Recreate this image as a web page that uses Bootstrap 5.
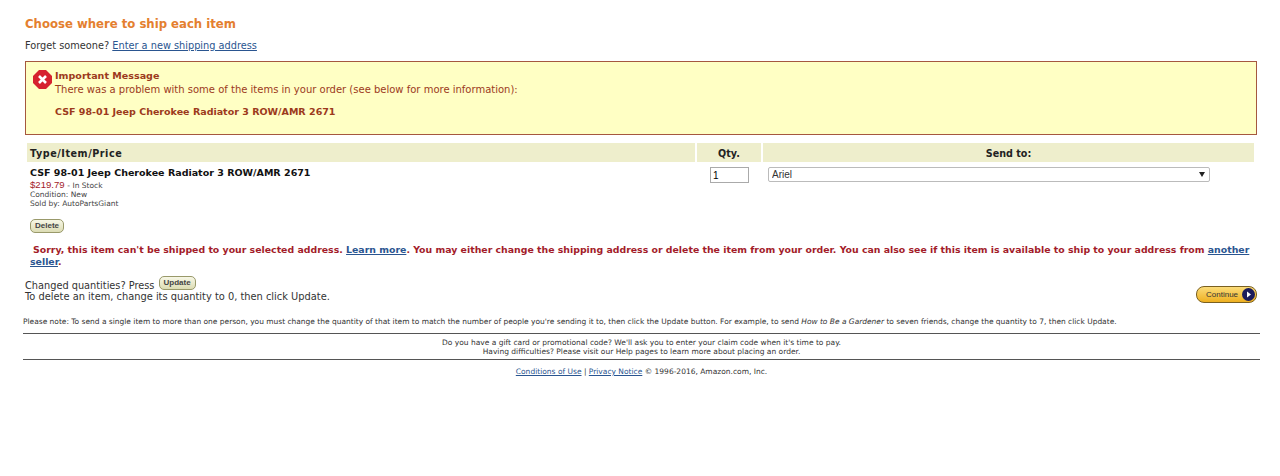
<!DOCTYPE html>
<html lang="en">
<head>
  <meta charset="UTF-8" />
  <meta name="viewport" content="width=device-width, initial-scale=1" />
  <title>Choose where to ship each item</title>
  <link href="https://cdn.jsdelivr.net/npm/bootstrap@5.3.3/dist/css/bootstrap.min.css" rel="stylesheet" />
  <style>
    body {
      font-family: "DejaVu Sans", Verdana, sans-serif;
      font-size: 9.85px;
      line-height: 13px;
      color: #333;
      background: #fff;
    }
    a { color: #2a5590; }
    .page-wrap { padding: 16px 20px 0 23px; }
    .ship-title {
      font-size: 11.7px;
      font-weight: 700;
      line-height: 16px;
      color: #e4802f;
      margin: 0 0 0 2px;
    }
    .forget-line { margin: 7px 0 0 2px; font-size: 9.77px; }
    .msg-box {
      margin: 9px 3px 0 2px;
      height: 74px;
      border: 1px solid #a5583f;
      background: #ffffc4;
      color: #9c3a1c;
      padding: 7px 7px;
    }
    .msg-icon { width: 19px; height: 19px; flex: none; margin-top: 1px; margin-right: 3px; }
    .msg-head { font-weight: 700; font-size: 9.55px; line-height: 14px; }
    .msg-text { font-size: 10px; }
    .msg-item { margin-top: 9px; font-weight: 700; font-size: 9.53px; }
    .ship-grid {
      display: grid;
      grid-template-columns: 668px 64px 491px;
      column-gap: 2px;
      margin: 8px 0 0 4px;
    }
    .head-cell {
      background: #eeeecc;
      font-weight: 700;
      font-size: 9.6px;
      height: 19px;
      line-height: 21px;
      padding: 0 3px;
      color: #222;
    }
    .head-first { letter-spacing: .55px; }
    .item-cell { padding-left: 3px; }
    .item-name { font-weight: 700; font-size: 9.53px; line-height: 12px; margin-top: 5px; color: #111; }
    .item-price { color: #a31c2a; font-family: "Liberation Sans", Arial, sans-serif; font-size: 9.6px; line-height: 11px; }
    .tiny-txt { font-family: "DejaVu Sans", Verdana, sans-serif; font-size: 7.5px; line-height: 9px; color: #444; }
    .old-btn {
      display: inline-block;
      font-family: "Liberation Sans", Arial, sans-serif;
      font-size: 8px;
      font-weight: 700;
      line-height: 10px;
      padding: 1px 4px;
      border: 1px solid #99996a;
      border-radius: 5px;
      background: linear-gradient(#f7f7e6, #dcdcb4);
      color: #444;
    }
    .delete-btn { margin-top: 11px; }
    .update-btn { vertical-align: 4px; margin-left: 1px; }
    .qty-input {
      width: 39px;
      height: 16px;
      border: 1px solid #aaa;
      font-family: "Liberation Sans", Arial, sans-serif;
      font-size: 10px;
      padding: 0 2px;
      margin: 5px 0 0 13px;
      display: block;
    }
    .send-select {
      appearance: none;
      display: block;
      width: 442px;
      height: 15px;
      margin: 5px 0 0 5px;
      font-family: "Liberation Sans", Arial, sans-serif;
      font-size: 10px;
      border: 1px solid #bbb;
      border-radius: 2px;
      background: #fff url("data:image/svg+xml,%3Csvg xmlns='http://www.w3.org/2000/svg' width='6' height='5'%3E%3Cpath d='M0 0h6L3 5z' fill='%23222'/%3E%3C/svg%3E") no-repeat right 4px center;
      padding: 0 3px;
      color: #333;
    }
    .sorry-msg { margin: 11px 3px 0 7px; font-weight: 700; font-size: 9.37px; line-height: 12px; color: #a31c2a; text-indent: 3px; }
    .sorry-msg a { color: #2a5590; }
    .update-row { margin: 8px 3px 0 2px; line-height: 12px; }
    .press-line { font-size: 9.77px; }
    .delete-hint { margin-top: -1px; }
    .continue-btn {
      width: 61px;
      height: 17px;
      border: 1px solid #7a6020;
      border-radius: 8px;
      background: linear-gradient(#fbdc7a, #eeb020);
      font-family: "Liberation Sans", Arial, sans-serif;
      font-size: 8px;
      color: #333;
      padding: 0 1px 0 9px;
    }
    .continue-dot { width: 13px; height: 13px; }
    .please-note { font-size: 7.48px; line-height: 9px; margin: 14px 0 0 0; color: #333; }
    .rule-line { height: 1px; background: #555; margin: 7px 0 0; opacity: 1; border: 0; }
    .foot-txt { font-size: 7.5px; line-height: 9px; text-align: center; padding: 4px 0 0; }
    .rule-second { margin-top: 3px; }
    .legal-txt { margin-top: 3px; }
  </style>
</head>
<body>
  <div class="page-wrap">
    <h1 class="ship-title">Choose where to ship each item</h1>
    <div class="forget-line">Forget someone? <a href="#">Enter a new shipping address</a></div>

    <div class="msg-box d-flex">
      <svg class="msg-icon" viewBox="0 0 19 19">
        <polygon points="6,0 13,0 19,6 19,13 13,19 6,19 0,13 0,6" fill="#d6222f" />
        <path d="M6 6l7 7M13 6l-7 7" stroke="#fff" stroke-width="2.6" />
      </svg>
      <div>
        <div class="msg-head">Important Message</div>
        <div class="msg-text">There was a problem with some of the items in your order (see below for more information):</div>
        <div class="msg-item">CSF 98-01 Jeep Cherokee Radiator 3 ROW/AMR 2671</div>
      </div>
    </div>

    <div class="ship-grid">
      <div class="head-cell head-first">Type/Item/Price</div>
      <div class="head-cell text-center">Qty.</div>
      <div class="head-cell text-center">Send to:</div>
      <div class="item-cell">
        <div class="item-name">CSF 98-01 Jeep Cherokee Radiator 3 ROW/AMR 2671</div>
        <div class="item-price">$219.79 <span class="tiny-txt">- In Stock</span></div>
        <div class="tiny-txt">Condition: New</div>
        <div class="tiny-txt">Sold by: AutoPartsGiant</div>
        <button type="button" class="old-btn delete-btn">Delete</button>
      </div>
      <div><input class="qty-input" type="text" value="1" /></div>
      <div><select class="send-select"><option>Ariel</option></select></div>
    </div>

    <div class="sorry-msg">Sorry, this item can't be shipped to your selected address. <a href="#">Learn more</a>. You may either change the shipping address or delete the item from your order. You can also see if this item is available to ship to your address from <a href="#">another seller</a>.</div>

    <div class="update-row d-flex justify-content-between align-items-end">
      <div>
        <div class="press-line">Changed quantities? Press <button type="button" class="old-btn update-btn">Update</button></div>
        <div class="delete-hint">To delete an item, change its quantity to 0, then click Update.</div>
      </div>
      <button type="button" class="continue-btn d-flex align-items-center justify-content-between">Continue
        <svg class="continue-dot" viewBox="0 0 13 13">
          <circle cx="6.5" cy="6.5" r="6.5" fill="#1c1c5c" />
          <path d="M5 3.5l4 3-4 3z" fill="#fff" />
        </svg>
      </button>
    </div>

    <p class="please-note">Please note: To send a single item to more than one person, you must change the quantity of that item to match the number of people you're sending it to, then click the Update button. For example, to send <i>How to Be a Gardener</i> to seven friends, change the quantity to 7, then click Update.</p>
    <hr class="rule-line" />
    <div class="foot-txt">Do you have a gift card or promotional code? We'll ask you to enter your claim code when it's time to pay.<br />Having difficulties? Please visit our Help pages to learn more about placing an order.</div>
    <hr class="rule-line rule-second" />
    <div class="foot-txt legal-txt"><a href="#">Conditions of Use</a> | <a href="#">Privacy Notice</a> © 1996-2016, Amazon.com, Inc.</div>
  </div>
  <script src="https://cdn.jsdelivr.net/npm/bootstrap@5.3.3/dist/js/bootstrap.bundle.min.js"></script>
</body>
</html>
